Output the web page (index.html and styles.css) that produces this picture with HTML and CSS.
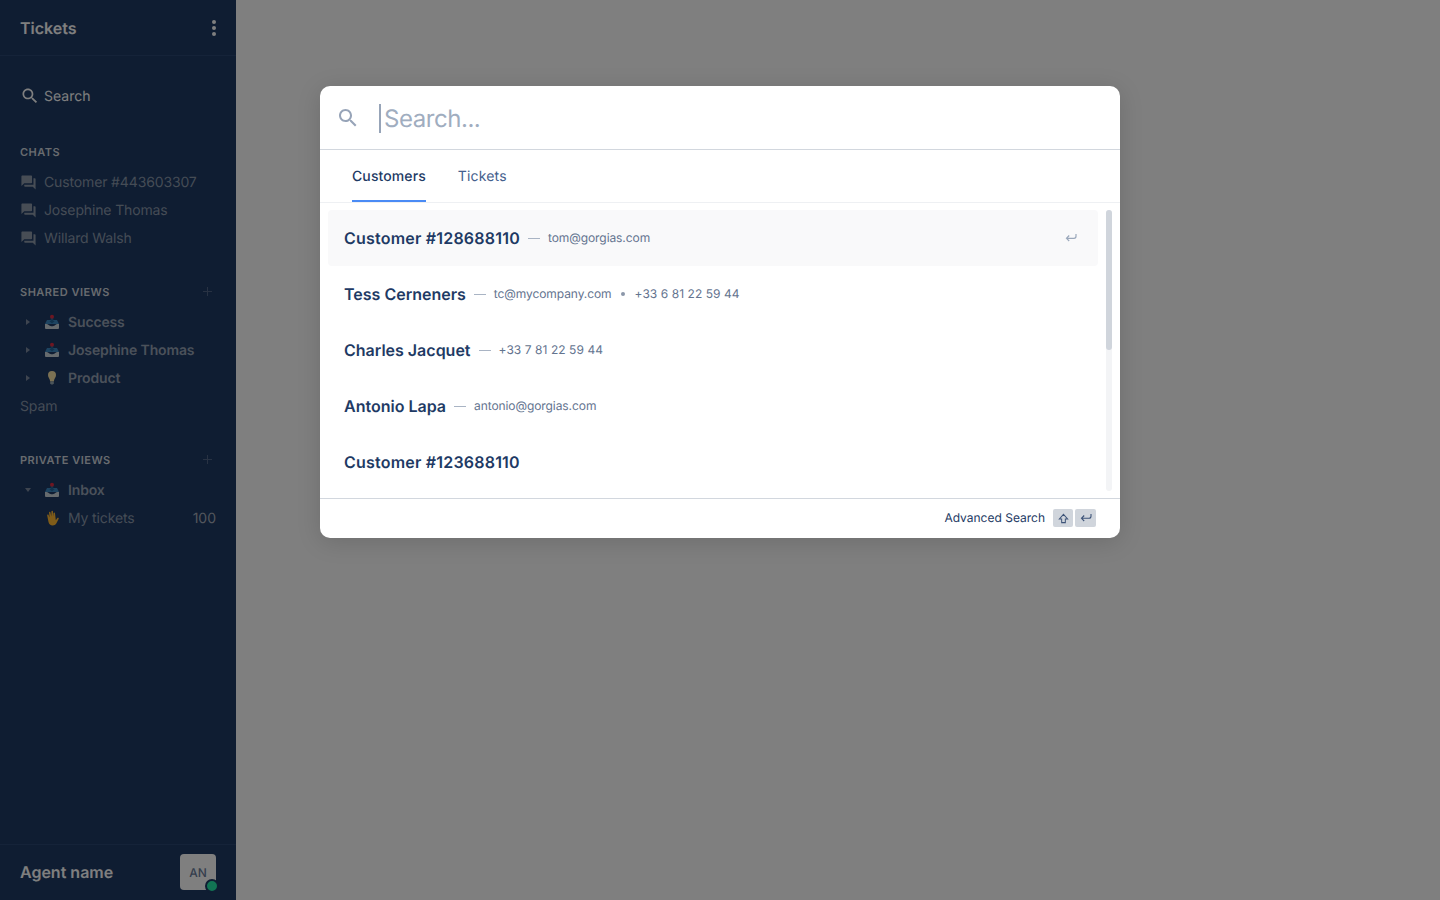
FILE: index.html
```html
<!DOCTYPE html>
<html lang="en">
<head>
<meta charset="utf-8">
<title>Tickets</title>
<link rel="stylesheet" href="styles.css">
</head>
<body>
<svg class="defs" width="0" height="0" aria-hidden="true">
  <symbol id="i-search" viewBox="0 0 24 24"><path d="M15.5 14h-.79l-.28-.27C15.41 12.59 16 11.11 16 9.5 16 5.91 13.09 3 9.5 3S3 5.91 3 9.5 5.91 16 9.5 16c1.61 0 3.09-.59 4.23-1.57l.27.28v.79l5 4.99L20.49 19l-4.99-5zm-6 0C7.01 14 5 11.99 5 9.5S7.01 5 9.5 5 14 7.01 14 9.5 11.99 14 9.5 14z"/></symbol>
  <symbol id="i-forum" viewBox="0 0 24 24"><path d="M21 6h-2v9H6v2c0 .55.45 1 1 1h11l4 4V7c0-.55-.45-1-1-1zm-4 6V3c0-.55-.45-1-1-1H3c-.55 0-1 .45-1 1v14l4-4h10c.55 0 1-.45 1-1z"/></symbol>
  <symbol id="i-inbox" viewBox="0 0 16 16">
    <path fill="#3b88c3" d="M3 6h10l2 4H1z"/>
    <path fill="#226699" d="M6.7 3.800h2.600V7h1.500L8 9.500 5.200 7h1.500z"/>
    <circle fill="#dd2e44" cx="8" cy="2.800" r="2"/>
    <path fill="#ccd6dd" d="M1 10c2.500 0 3 .3 4 1.200 1 .8 2 1 3 1s2-.2 3-1c1-.9 1.500-1.200 4-1.200v4a1 1 0 0 1-1 1H2a1 1 0 0 1-1-1z"/>
  </symbol>
  <symbol id="i-bulb" viewBox="0 0 16 16">
    <path fill="#f7e2a6" d="M8 1a4 4 0 0 0-4 4c0 2.500 1.800 3.500 2.200 6.500h3.600C10.200 8.500 12 7.500 12 5a4 4 0 0 0-4-4z"/>
    <path fill="#99aab5" d="M6.200 11.500h3.600v2L8.800 14.500H7.200l-1-1z"/>
  </symbol>
  <symbol id="i-hand" viewBox="0 0 16 16">
    <g transform="translate(16 0) scale(-1 1)">
      <path fill="#ffb833" d="M5 3.200c0-1 1.400-1 1.500 0l.4 3.300L7 1.600c0-1 1.600-1 1.600 0l.1 5 .8-4.200c.2-1 1.600-.8 1.500.2l-.6 5 1-2.600c.3-.9 1.700-.5 1.400.5L11.500 12c-.5 2-2 3.500-4 3.500-2.200 0-3.500-1.200-4.300-3L1.300 8.800c-.4-.9.900-1.500 1.400-.7l1.500 2.100.1-1z"/>
    </g>
  </symbol>
</svg>

<div class="app">
  <aside class="sidebar">
    <header class="side-head">
      <h1 class="side-title">Tickets</h1>
      <span class="kebab"><i></i><i></i><i></i></span>
    </header>

    <div class="side-body">
      <div class="side-search">
        <svg class="ico-20"><use href="#i-search"/></svg>
        <span>Search</span>
      </div>

      <section class="group group-chats">
        <div class="group-title">CHATS</div>
        <div class="row chat"><svg class="ico-chat"><use href="#i-forum"/></svg><span class="chat-name">Customer #443603307</span></div>
        <div class="row chat"><svg class="ico-chat"><use href="#i-forum"/></svg><span class="chat-name">Josephine Thomas</span></div>
        <div class="row chat"><svg class="ico-chat"><use href="#i-forum"/></svg><span class="chat-name">Willard Walsh</span></div>
      </section>

      <section class="group">
        <div class="group-title">SHARED VIEWS<span class="plus"></span></div>
        <div class="row view"><span class="caret right"></span><svg class="emoji"><use href="#i-inbox"/></svg><span class="view-name">Success</span></div>
        <div class="row view"><span class="caret right"></span><svg class="emoji"><use href="#i-inbox"/></svg><span class="view-name">Josephine Thomas</span></div>
        <div class="row view"><span class="caret right"></span><svg class="emoji"><use href="#i-bulb"/></svg><span class="view-name">Product</span></div>
        <div class="row spam">Spam</div>
      </section>

      <section class="group">
        <div class="group-title">PRIVATE VIEWS<span class="plus"></span></div>
        <div class="row view"><span class="caret down"></span><svg class="emoji"><use href="#i-inbox"/></svg><span class="view-name">Inbox</span></div>
        <div class="row view sub"><span class="caret none"></span><svg class="emoji"><use href="#i-hand"/></svg><span class="view-name plain">My tickets</span><span class="count">100</span></div>
      </section>
    </div>

    <footer class="side-foot">
      <span class="agent">Agent name</span>
      <span class="avatar">AN<i class="status"></i></span>
    </footer>
  </aside>
  <main class="content"></main>
</div>

<div class="overlay"></div>

<div class="modal">
  <div class="modal-search">
    <svg class="ico-24"><use href="#i-search"/></svg>
    <span class="cursor"></span>
    <span class="placeholder">Search...</span>
  </div>
  <nav class="tabs">
    <span class="tab active">Customers</span>
    <span class="tab">Tickets</span>
  </nav>
  <div class="results">
    <ul class="list">
      <li class="result selected">
        <strong class="cust-id">Customer #128688110</strong><span class="dash"></span><span class="meta">tom@gorgias.com</span>
        <svg class="ret" viewBox="0 0 12 10"><path d="M11 1v2.300a2 2 0 0 1-2 2H1.500M4.200 2.500L1.500 5.300 4.200 8"/></svg>
      </li>
      <li class="result">
        <strong>Tess Cerneners</strong><span class="dash"></span><span class="meta">tc@mycompany.com</span><span class="dot"></span><span class="meta phone">+33 6 81 22 59 44</span>
      </li>
      <li class="result">
        <strong>Charles Jacquet</strong><span class="dash"></span><span class="meta phone">+33 7 81 22 59 44</span>
      </li>
      <li class="result">
        <strong>Antonio Lapa</strong><span class="dash"></span><span class="meta">antonio@gorgias.com</span>
      </li>
      <li class="result">
        <strong class="cust-id">Customer #123688110</strong>
      </li>
    </ul>
    <div class="scroll"><div class="thumb"></div></div>
  </div>
  <div class="modal-foot">
    <span class="adv">Advanced Search</span>
    <span class="key key-shift"><svg viewBox="0 0 12 12"><path d="M6 1.500L10.500 6.500H8V10.500H4V6.500H1.500z"/></svg></span>
    <span class="key key-ret"><svg viewBox="0 0 12 10"><path d="M11 1v2.300a2 2 0 0 1-2 2H1.500M4.200 2.500L1.500 5.300 4.200 8"/></svg></span>
  </div>
</div>
</body>
</html>
```
FILE: styles.css
```css
* { box-sizing: border-box; }
html, body { margin: 0; padding: 0; height: 100%; }
body {
  font-family: Inter, "Liberation Sans", sans-serif;
  font-size: 14px;
  color: #fff;
  overflow: hidden;
  text-rendering: geometricPrecision;
}
.defs { display: block; height: 0; }
ul { list-style: none; margin: 0; padding: 0; }

.app { display: flex; height: 900px; }
.content { flex: 1; background: #fff; }

.overlay {
  position: absolute;
  inset: 0;
  background: rgba(0, 0, 0, .5);
}

/* Sidebar */
.sidebar {
  width: 236px;
  flex: none;
  height: 900px;
  background: #1e3a64;
  display: flex;
  flex-direction: column;
}
.side-head {
  height: 56px;
  flex: none;
  padding: 0 20px;
  display: flex;
  align-items: center;
  justify-content: space-between;
  border-bottom: 1px solid #2b4773;
}
.side-title { margin: 0; font-size: 16px; line-height: 20px; font-weight: 600; color: #fff; }
.kebab { display: flex; flex-direction: column; gap: 2px; width: 4px; }
.kebab i { width: 4px; height: 4px; border-radius: 50%; background: #fff; display: block; }

.side-body { flex: 1; padding: 26px 20px 0; }
.side-search { height: 28px; display: flex; align-items: center; gap: 4px; color: #fff; }
.ico-20 { width: 20px; height: 20px; fill: #fff; }

.group { margin-top: 30px; }
.group-chats { margin-top: 32px; }
.group-title {
  position: relative;
  height: 20px;
  line-height: 20px;
  margin-bottom: 6px;
  font-size: 11px;
  font-weight: 600;
  letter-spacing: .5px;
  color: #d0d6de;
}
.plus { position: absolute; right: 3px; top: 5px; width: 10px; height: 10px; opacity: .22; }
.plus::before, .plus::after { content: ""; position: absolute; background: #fff; }
.plus::before { left: 4px; top: 0; width: 1px; height: 9px; }
.plus::after { left: 0; top: 4px; width: 9px; height: 1px; }

.row { height: 28px; display: flex; align-items: center; line-height: 28px; }
.chat { color: #8a98ab; gap: 7px; }
.chat-name { margin-top: 2px; letter-spacing: -.14px; }
.ico-chat { width: 17px; height: 17px; fill: #8e9aab; flex: none; }

.caret { width: 24px; flex: none; display: flex; align-items: center; padding-left: 6px; }
.caret.right::before {
  content: ""; border-left: 4px solid #7d8aa0; border-top: 3px solid transparent; border-bottom: 3px solid transparent;
}
.caret.down { padding-left: 5px; }
.caret.down::before {
  content: ""; border-top: 4px solid #7d8aa0; border-left: 3px solid transparent; border-right: 3px solid transparent;
}
.emoji { width: 16px; height: 16px; flex: none; margin-right: 8px; }
.view { color: #8a98ab; }
.view-name { margin-top: 2px; font-weight: 600; color: #96a2b4; letter-spacing: -.14px; }
.view-name.plain { font-weight: 400; color: #8a98ab; }
.count { margin-top: 2px; margin-left: auto; color: #a5adba; }
.spam { color: #8a98ab; padding-top: 2px; letter-spacing: -.14px; }

.side-foot {
  height: 56px;
  flex: none;
  padding: 0 20px 1px;
  display: flex;
  align-items: center;
  justify-content: space-between;
  border-top: 1px solid #2b4773;
}
.agent { font-size: 16px; font-weight: 600; color: #fff; }
.avatar {
  position: relative;
  width: 36px;
  height: 36px;
  border-radius: 4px;
  background: #fff;
  color: #6a7d9b;
  font-size: 12px;
  font-weight: 500;
  display: flex;
  align-items: center;
  justify-content: center;
}
.status {
  position: absolute;
  right: -3px;
  bottom: -3px;
  width: 14px;
  height: 14px;
  border-radius: 50%;
  background: #24e8a8;
  border: 2px solid #1e3a64;
}

/* Modal */
.modal {
  position: absolute;
  left: 320px;
  top: 86px;
  width: 800px;
  height: 452px;
  background: #fff;
  border-radius: 10px;
  display: flex;
  flex-direction: column;
  overflow: hidden;
  box-shadow: 0 4px 24px rgba(0, 0, 0, .14);
}
.modal-search {
  height: 64px;
  flex: none;
  display: flex;
  align-items: center;
  padding-left: 16px;
  border-bottom: 1px solid #d2d7de;
}
.ico-24 { width: 24px; height: 24px; fill: #97a4b8; flex: none; }
.cursor { width: 2px; height: 29px; background: #97a4b8; margin: 2px 0 0 19px; flex: none; }
.placeholder { font-size: 24px; line-height: 32px; color: #a0adbf; margin: 2px 0 0 3px; letter-spacing: -.45px; }

.tabs {
  height: 53px;
  flex: none;
  display: flex;
  gap: 32px;
  padding-left: 32px;
  border-bottom: 1px solid #eef0f3;
}
.tab { height: 52px; line-height: 54px; font-size: 14px; color: #44608d; letter-spacing: .15px; }
.tab.active { color: #1e3a64; font-weight: 500; letter-spacing: .1px; border-bottom: 2px solid #4a8bf5; }

.results { flex: 1; min-height: 0; display: flex; padding: 7px 8px 8px; }
.list { width: 770px; flex: none; }
.result {
  height: 56px;
  display: flex;
  align-items: center;
  padding: 0 16px;
  border-radius: 4px;
  color: #1e3a64;
}
.result.selected { background: #f9f9fa; }
.result strong { font-size: 16px; font-weight: 600; }
.result .cust-id { letter-spacing: .21px; }
.dash { width: 12px; height: 1px; background: #a9b4c4; margin: 0 8px; flex: none; }
.meta { font-size: 12px; color: #64748f; margin-bottom: 2px; letter-spacing: -.08px; }
.meta.phone { letter-spacing: .06px; }
.dot { width: 4px; height: 4px; border-radius: 50%; background: #8b97a9; margin: 0 10px 0 9px; flex: none; }
.ret {
  width: 12px; height: 10px; margin-left: auto; margin-right: 5px;
  fill: none; stroke: #9ba8bb; stroke-width: 1.2;
}
.scroll { width: 6px; height: 281px; margin-left: 8px; border-radius: 3px; background: #f3f4f6; flex: none; }
.thumb { height: 140px; border-radius: 3px; background: #d0d5dc; }

.modal-foot {
  height: 40px;
  flex: none;
  display: flex;
  align-items: center;
  justify-content: flex-end;
  padding: 0 24px 1px 0;
  border-top: 1px solid #d2d7de;
}
.adv { font-size: 12px; color: #1e3a64; margin: 0 8px 2px 0; }
.key {
  height: 18px;
  border-radius: 2px;
  background: #d0d5dc;
  display: flex;
  align-items: center;
  justify-content: center;
}
.key svg { fill: none; stroke: #3e5479; stroke-width: 1.1; }
.key-shift { width: 20px; margin-right: 2px; }
.key-shift svg { width: 11px; height: 11px; }
.key-ret { width: 21px; }
.key-ret svg { width: 12px; height: 10px; }
```
